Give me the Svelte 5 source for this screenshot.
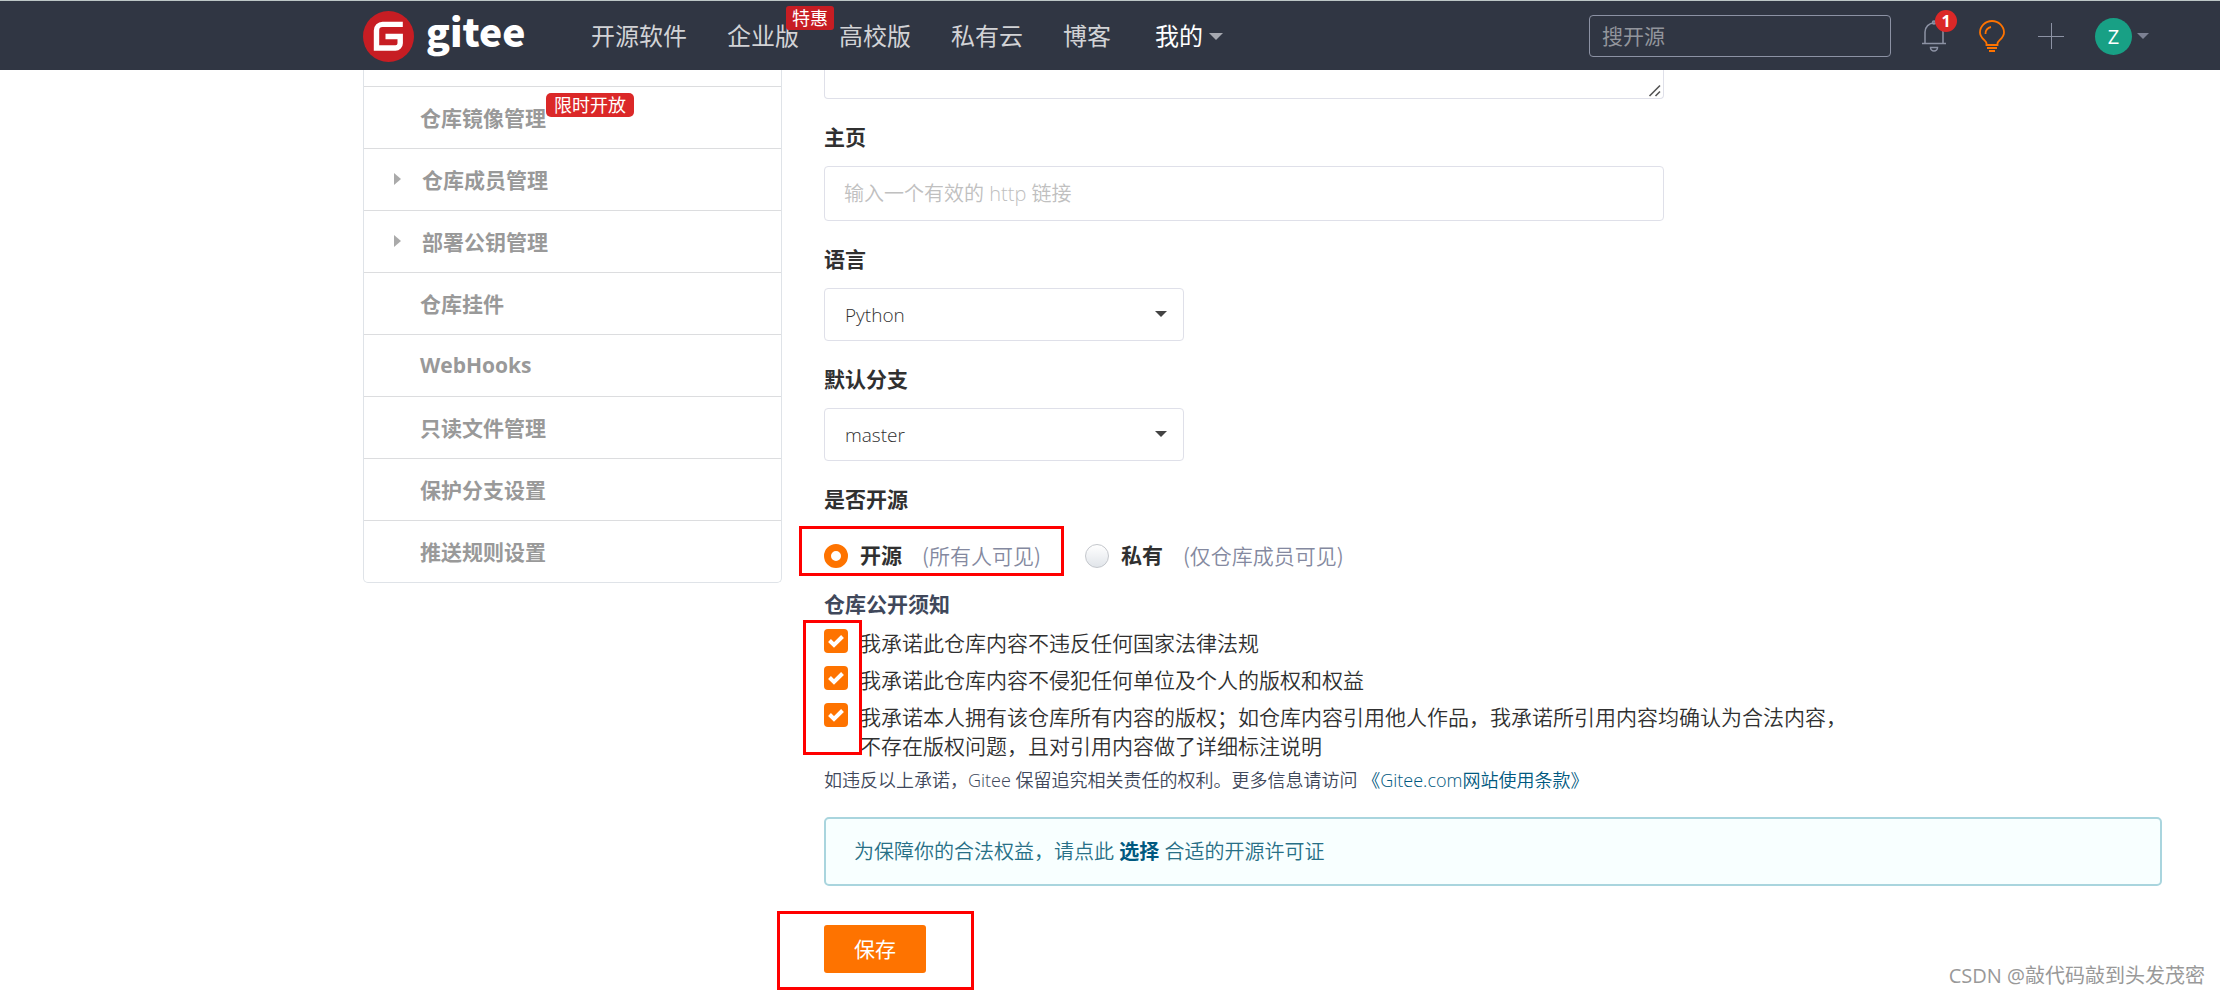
<script>
  const nav = [
    { text: '开源软件' },
    { text: '企业版', tag: '特惠' },
    { text: '高校版' },
    { text: '私有云' },
    { text: '博客' }
  ];
  const menu = [
    { text: '仓库镜像管理', tag: '限时开放' },
    { text: '仓库成员管理', fold: true },
    { text: '部署公钥管理', fold: true },
    { text: '仓库挂件' },
    { text: 'WebHooks' },
    { text: '只读文件管理' },
    { text: '保护分支设置' },
    { text: '推送规则设置' }
  ];
  const promises = [
    '我承诺此仓库内容不违反任何国家法律法规',
    '我承诺此仓库内容不侵犯任何单位及个人的版权和权益',
    '我承诺本人拥有该仓库所有内容的版权；如仓库内容引用他人作品，我承诺所引用内容均确认为合法内容，不存在版权问题，且对引用内容做了详细标注说明'
  ];
  let visibility = $state('public');
  let agreed = $state([true, true, true]);
</script>

<header>
  <a class="logo" href="#home" aria-label="gitee">
    <svg viewBox="0 0 51 51" width="51" height="51" aria-hidden="true">
      <circle cx="25.5" cy="25.5" r="25.5" fill="#c71d23" />
      <path d="M39.8 13.4H19.5a6 6 0 0 0-6 6V37H32.5a4.700 4.700 0 0 0 4.700-4.700V25.500H22.500" fill="none" stroke="#fff" stroke-width="5.4" />
    </svg>
    <span>gitee</span>
  </a>
  <nav>
    {#each nav as item}
      <a href="#nav">{item.text}{#if item.tag}<em>{item.tag}</em>{/if}</a>
    {/each}
    <button class="mine">我的<i class="caret"></i></button>
  </nav>
  <div class="tools">
    <input class="search" type="search" placeholder="搜开源" aria-label="搜开源" />
    <button class="bell" aria-label="1">
      <svg viewBox="0 0 26 32" width="26" height="32" fill="none" stroke="#8c92a4" stroke-width="1.5">
        <path d="M1 23.500h24M4 23.500V12a9 9 0 0 1 18 0v11.500M9.500 27.500h7a3.500 3.500 0 0 1-7 0z" />
        <circle cx="13" cy="2.500" r="1.500" />
      </svg>
      <span class="count">1</span>
    </button>
    <button class="bulb" aria-label="bulb">
      <svg viewBox="0 0 28 32" width="28" height="32" fill="none" stroke="#fe7300" stroke-width="1.8">
        <path d="M8.500 25h11v-1.500c0-3 6.500-5 6.500-11a12 11.500 0 0 0-24 0c0 6 6.500 8 6.500 11zM7.500 14a6.500 6.500 0 0 1 5.500-7M9 28h10M11 31h6" />
      </svg>
    </button>
    <button class="plus" aria-label="plus">
      <svg viewBox="0 0 26 28" width="26" height="28" stroke="#8c92a4"><path d="M0 14.500h26M13.500 1v26" /></svg>
    </button>
    <button class="user"><span>Z</span><i class="caret"></i></button>
  </div>
</header>

<div class="page">
  <aside>
    <ul>
      {#each menu as item}
        <li>
          <a href="#menu" class:fold={item.fold}>{#if item.fold}<i></i>{/if}{item.text}{#if item.tag}<em>{item.tag}</em>{/if}</a>
        </li>
      {/each}
    </ul>
  </aside>

  <main>
    <form>
      <textarea class="wide" aria-label="仓库介绍"></textarea>
      <label class="title" for="home">主页</label>
      <input class="wide home" id="home" type="text" placeholder="输入一个有效的 http 链接" />
      <label class="title" for="lang">语言</label>
      <div class="select"><select id="lang"><option>Python</option></select></div>
      <label class="title" for="branch">默认分支</label>
      <div class="select"><select id="branch"><option>master</option></select></div>
      <div class="title" id="vis">是否开源</div>
      <div class="radios" role="radiogroup" aria-labelledby="vis">
        <label class="marked">
          <input type="radio" name="visibility" value="public" bind:group={visibility} />
          <b>开源</b><span>(所有人可见)</span>
        </label>
        <label>
          <input type="radio" name="visibility" value="private" bind:group={visibility} />
          <b>私有</b><span>(仅仓库成员可见)</span>
        </label>
      </div>
      <div class="notice">仓库公开须知</div>
      <div class="promises marked">
        {#each promises as text, i}
          <label>
            <input type="checkbox" bind:checked={agreed[i]} />
            <span>{text}</span>
          </label>
        {/each}
      </div>
      <p class="terms">如违反以上承诺，Gitee 保留追究相关责任的权利。更多信息请访问 <a href="#terms">《Gitee.com网站使用条款》</a></p>
      <div class="alert">为保障你的合法权益，请点此 <a href="#license">选择</a> 合适的开源许可证</div>
      <div class="save marked"><button type="button">保存</button></div>
    </form>
  </main>
</div>
<div class="watermark">CSDN @敲代码敲到头发茂密</div>

<style>
  :global(body) {
    background: #fff;
    font-family: 'Open Sans', 'Noto Sans CJK SC', sans-serif;
    font-size: 21px;
    color: #303030;
  }
  :global(#app) {
    position: relative;
  }
  *,
  *::after {
    box-sizing: border-box;
  }
  a {
    color: inherit;
    text-decoration: none;
  }
  button {
    padding: 0;
    border: 0;
    background: none;
    font: inherit;
    color: inherit;
  }
  input,
  select,
  textarea {
    margin: 0;
    font: inherit;
  }
  em {
    font-style: normal;
    font-weight: 400;
  }
  svg {
    display: block;
  }
  header {
    height: 70px;
    padding: 1px 71px 0 363px;
    border-top: 1px solid #bcc6c6;
    background: #303643;
    display: flex;
    align-items: center;
  }
  .logo {
    display: flex;
    align-items: center;
    gap: 12px;
    width: 228px;
    color: #fff;
  }
  .logo span {
    font: 900 39px/48px 'Noto Sans CJK SC', sans-serif;
    padding-bottom: 12px;
  }
  nav {
    display: flex;
    gap: 40px;
    font-size: 24px;
    line-height: 36px;
    color: #d2d3d6;
    white-space: nowrap;
  }
  nav a {
    position: relative;
  }
  nav em {
    position: absolute;
    left: 59px;
    top: -12px;
    padding: 0 6px;
    border-radius: 3px;
    background: #c71d23;
    color: #fff;
    font-size: 18px;
    line-height: 24px;
  }
  .mine {
    display: flex;
    align-items: center;
    gap: 6px;
    margin-left: 4px;
    color: #fff;
  }
  .caret {
    border: 7px solid transparent;
    border-top-color: #a5a8b0;
    border-bottom: 0;
  }
  .tools {
    margin-left: auto;
    display: flex;
    align-items: center;
  }
  .search {
    width: 302px;
    height: 42px;
    padding: 0 12px;
    border: 1px solid #8c92a4;
    border-radius: 4px;
    background: transparent;
    color: #fff;
    margin-right: 30px;
  }
  .search::placeholder {
    color: #92959c;
    opacity: 1;
  }
  .bell {
    position: relative;
    margin-right: 31px;
  }
  .count {
    position: absolute;
    left: 14px;
    top: -10px;
    width: 22px;
    border-radius: 11px;
    background: #db2828;
    color: #fff;
    font-size: 16px;
    font-weight: 700;
    line-height: 22px;
  }
  .bulb {
    margin-right: 32px;
  }
  .plus {
    margin-right: 31px;
  }
  .user {
    display: flex;
    align-items: center;
    gap: 5px;
  }
  .user span {
    width: 37px;
    border-radius: 50%;
    background: #18a085;
    color: #fff;
    font-size: 20px;
    line-height: 37px;
  }
  .user .caret {
    border-width: 6px 6px 0;
    border-top-color: #7c8193;
  }
  .page {
    display: flex;
    align-items: flex-start;
    gap: 42px;
    padding: 0 58px 22px 363px;
  }
  aside {
    flex: 0 0 419px;
    border: 1px solid #dfe3e8;
    border-top: 0;
    border-radius: 0 0 5px 5px;
    padding-top: 16px;
  }
  ul {
    margin: 0;
    padding: 0;
    list-style: none;
  }
  li {
    border-top: 1px solid #dcdddf;
  }
  li a {
    position: relative;
    display: flex;
    align-items: center;
    height: 61px;
    padding: 0 0 2px 56px;
    font-weight: 700;
    color: #999;
  }
  li a.fold {
    padding-left: 30px;
  }
  li i {
    border: 6px solid transparent;
    border-left: 7px solid #aaa;
    border-right: 0;
    margin-right: 21px;
  }
  li em {
    align-self: flex-start;
    margin-top: 6px;
    padding: 0 8px;
    border-radius: 5px;
    background: #db2828;
    color: #fff;
    font-size: 18px;
    line-height: 24px;
  }
  main {
    flex: 1;
    min-width: 0;
  }
  form {
    display: flex;
    flex-direction: column;
    align-items: flex-start;
  }
  .wide {
    width: 100%;
    max-width: 840px;
    border: 1px solid #dfe0e9;
    border-radius: 4px;
    padding: 0 19px;
    background: #fff;
  }
  textarea.wide {
    height: 29px;
    border-top: 0;
    border-radius: 0 0 4px 4px;
    display: block;
    resize: vertical;
  }
  textarea::-webkit-resizer {
    background: url("data:image/svg+xml,%3Csvg xmlns='http://www.w3.org/2000/svg' viewBox='0 0 15 15'%3E%3Cpath d='M1.500 13L12 2.500M7.500 13L12 8.500' fill='none' stroke='%23555' stroke-width='1.600'/%3E%3C/svg%3E") no-repeat right bottom / 15px 15px;
  }
  .home {
    height: 55px;
    font-size: 20px;
  }
  .home::placeholder {
    color: #c0c0c0;
    font-weight: 350;
    opacity: 1;
  }
  .title {
    margin: 23px 0 13px;
    line-height: 31px;
    font-weight: 700;
  }
  .select {
    position: relative;
    width: 360px;
  }
  .select::after {
    content: '';
    position: absolute;
    right: 17px;
    top: 23px;
    border: 6px solid transparent;
    border-top-color: #444;
    border-bottom: 0;
    pointer-events: none;
  }
  select {
    display: block;
    appearance: none;
    width: 100%;
    height: 53px;
    padding: 0 20px;
    border: 1px solid #dfe0e9;
    border-radius: 4px;
    background: #fff;
    color: #303030;
    font-size: 19px;
    font-weight: 350;
  }
  .marked {
    position: relative;
  }
  .marked::after {
    content: '';
    position: absolute;
    border: 3px solid #f00;
    pointer-events: none;
  }
  .radios {
    display: flex;
    gap: 44px;
    line-height: 31px;
    margin-top: 12px;
  }
  .radios label {
    display: flex;
    align-items: center;
  }
  .radios .marked::after {
    inset: -14px -23px -5px -25px;
  }
  .radios span {
    margin-left: 20px;
    font-family: 'Noto Sans CJK SC', sans-serif;
    color: #8489a0;
    font-weight: 350;
  }
  input[type='radio'],
  input[type='checkbox'] {
    appearance: none;
    flex: none;
    width: 24px;
    height: 24px;
    margin-right: 12px;
  }
  input[type='radio'] {
    border: 1px solid #c4c7cc;
    border-radius: 50%;
    background: linear-gradient(#fff, #e1e5ea);
  }
  input[type='radio']:checked {
    border: 7px solid #fe7300;
    background: #fff;
  }
  input[type='checkbox'] {
    border-radius: 4px;
    border: 1px solid #c4c7cc;
  }
  input[type='checkbox']:checked {
    border: 0;
    background: #fe7300 url("data:image/svg+xml,%3Csvg xmlns='http://www.w3.org/2000/svg' viewBox='0 0 24 24'%3E%3Cpath d='M5.500 11.500l4.500 4.500 8.500-8.500' fill='none' stroke='white' stroke-width='4'/%3E%3C/svg%3E");
  }
  .notice {
    margin: 18px 0 10px;
    line-height: 30px;
    font-weight: 700;
    color: #40485b;
  }
  .promises {
    display: flex;
    flex-direction: column;
    gap: 8px;
  }
  .promises.marked::after {
    left: -21px;
    top: -9px;
    width: 59px;
    bottom: 6px;
  }
  .promises label {
    display: flex;
    align-items: flex-start;
    max-width: 1030px;
    line-height: 29px;
    font-weight: 350;
  }
  .terms {
    margin: 6px 0 0;
    font-size: 18px;
    line-height: 27px;
    font-weight: 350;
    color: #40485b;
  }
  .terms a {
    color: #005980;
  }
  .alert {
    align-self: stretch;
    margin-top: 23px;
    padding: 18px 28px;
    border: 2px solid #a9d5de;
    border-radius: 5px;
    background: #f8ffff;
    color: #276f86;
    font-size: 20px;
    line-height: 29px;
    font-weight: 350;
  }
  .alert a {
    font-weight: 700;
    color: #005980;
  }
  .save {
    margin-top: 39px;
  }
  .save.marked::after {
    inset: -14px -48px -17px -47px;
  }
  .save button {
    display: block;
    padding: 0 30px;
    border-radius: 3px;
    background: #fe7300;
    color: #fff;
    line-height: 48px;
  }
  .watermark {
    position: absolute;
    right: 15px;
    bottom: 5px;
    font-size: 20px;
    line-height: 28px;
    color: #999;
  }
</style>
